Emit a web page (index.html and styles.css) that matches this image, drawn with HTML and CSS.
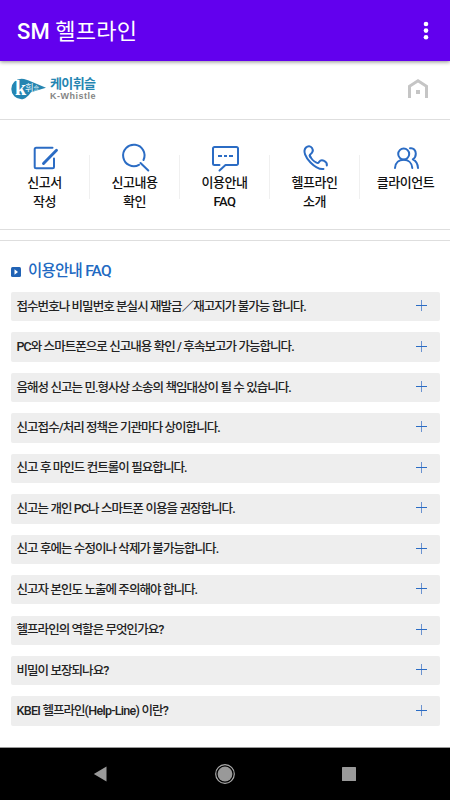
FILE: index.html
```html
<!DOCTYPE html>
<html lang="ko">
<head>
<meta charset="utf-8">
<meta name="viewport" content="width=device-width">
<title>SM 헬프라인</title>
<link rel="stylesheet" href="styles.css">
</head>
<body>
<header class="appbar">
  <h1>SM <span>헬프라인</span></h1>
  <svg class="more" width="6" height="20" viewBox="0 0 6 20" fill="#fff"><circle cx="3" cy="3" r="2.3"/><circle cx="3" cy="9.6" r="2.3"/><circle cx="3" cy="16.2" r="2.3"/></svg>
</header>
<div class="brand">
  <svg class="logo" width="36" height="22" viewBox="0 0 36 22">
    <path d="M10.5 .8C14 .8 17 2.2 20 3.6L35 9.8L20 14.2C17 18.5 14 21.2 10.5 21.2A10.2 10.2 0 0 1 10.5 .8Z" fill="#2585b1"/>
    <text class="logo-k" x="4" y="17.3">k</text>
    <text class="logo-ko" x="14" y="13">휘</text>
    <text class="logo-ko2" x="22.6" y="12">슬</text>
  </svg>
  <div class="names"><span class="ko">케이휘슬</span><span class="en">K-Whistle</span></div>
  <svg class="home" width="22" height="20" viewBox="0 0 22 20"><path d="M2.5 19V7.2L11 1.8L19.5 7.2V19" fill="none" stroke="#c5c5c5" stroke-width="3"/><rect x="9" y="11" width="4" height="4" fill="#c5c5c5"/></svg>
</div>
<nav class="menu">
  <a><svg width="30" height="30" viewBox="0 0 30 30"><path d="M22.500 4.700H6.200a1.500 1.500 0 0 0-1.500 1.500V23.700a1.500 1.500 0 0 0 1.500 1.500H22.500a1.500 1.500 0 0 0 1.500-1.500V15.500"/><path d="M13.500 20.500L26.500 7.200" stroke-width="2.900"/></svg><span>신고서<br>작성</span></a>
  <a><svg width="30" height="30" viewBox="0 0 30 30"><path d="M19 21.800A10.700 10.700 0 1 1 23.500 17M20.500 20L28.300 27.500"/></svg><span>신고내용<br>확인</span></a>
  <a><svg width="30" height="30" viewBox="0 0 30 30"><path d="M9.500 22H4.500a1.500 1.500 0 0 1-1.500-1.500V5.500a1.500 1.500 0 0 1 1.500-1.500H26.500a1.500 1.500 0 0 1 1.500 1.500V20.500a1.500 1.500 0 0 1-1.500 1.500H15.500L9.500 27.500"/><path class="dots" d="M8 13h4M14 13h3M19 13h4"/></svg><span>이용안내<br>FAQ</span></a>
  <a><svg width="30" height="30" viewBox="0 0 30 30"><path d="M10.500 14.200c-1-1-1-2 0-3C13.500 9 13.200 7 12 5 10.500 2.700 7.800 2.700 6 4.500 2.500 8 5.500 14.500 10.500 19.500 15 24 20 26.500 23.500 26"/><path d="M9.800 12.500C11 15.500 14 18.500 16.500 19.700c1.200.5 2 .2 2.600-.8 1.200-1.700 3.400-2 5.100-1 2 1.100 3 2.700 2.600 4.600"/></svg><span>헬프라인<br>소개</span></a>
  <a><svg width="30" height="30" viewBox="0 0 30 30"><circle cx="13.700" cy="11" r="5.500"/><path d="M5 25c.4-5.400 4.200-8.200 8.700-8.200s8.200 2.800 8.600 8.200M20 5.300c3.500-.8 5.800 2 5.800 5.500 0 2.600-1.200 4.500-3 5.500 3.200 1.500 5 4.700 5.200 8.700"/></svg><span>클라이언트</span></a>
</nav>
<main class="faq">
  <h2><svg width="10" height="10" viewBox="0 0 10 10"><rect width="10" height="10" rx="1.500" fill="#2163b5"/><path d="M3.500 2.300L7 5L3.500 7.700Z" fill="#fff"/></svg>이용안내 FAQ</h2>
  <ul>
    <li><span>접수번호나 비밀번호 분실시 재발금／재고지가 불가능 합니다.</span><i></i></li>
    <li><span>PC와 스마트폰으로 신고내용 확인 / 후속보고가 가능합니다.</span><i></i></li>
    <li><span>음해성 신고는 민.형사상 소송의 책임대상이 될 수 있습니다.</span><i></i></li>
    <li><span>신고접수/처리 정책은 기관마다 상이합니다.</span><i></i></li>
    <li><span>신고 후 마인드 컨트롤이 필요합니다.</span><i></i></li>
    <li><span>신고는 개인 PC나 스마트폰 이용을 권장합니다.</span><i></i></li>
    <li><span>신고 후에는 수정이나 삭제가 불가능합니다.</span><i></i></li>
    <li><span>신고자 본인도 노출에 주의해야 합니다.</span><i></i></li>
    <li><span>헬프라인의 역할은 무엇인가요?</span><i></i></li>
    <li><span>비밀이 보장되나요?</span><i></i></li>
    <li><span><b>KBEI</b> 헬프라인<b>(Help-Line)</b> 이란?</span><i></i></li>
  </ul>
</main>
<footer class="navbar">
  <svg width="14" height="16" viewBox="0 0 14 16"><path d="M.8 8L13.500 .5V15.500Z" fill="#999"/></svg>
  <svg width="20" height="20" viewBox="0 0 20 20"><circle cx="10" cy="10" r="9.300" fill="none" stroke="#aaa" stroke-width="1.200"/><circle cx="10" cy="10" r="7.400" fill="#999"/></svg>
  <svg width="14" height="14" viewBox="0 0 14 14"><rect width="14" height="14" rx=".5" fill="#999"/></svg>
</footer>
</body>
</html>
```
FILE: styles.css
```css
* { box-sizing: border-box; margin: 0; padding: 0; }
body {
  width: 450px;
  height: 800px;
  overflow: hidden;
  display: flex;
  flex-direction: column;
  background: #fff;
  color: #111;
  font-family: Roboto, "Noto Sans CJK KR", sans-serif;
}
.appbar {
  flex: none;
  height: 61px;
  padding: 1px 21px 0 17px;
  display: flex;
  align-items: center;
  justify-content: space-between;
  background: #6200ee;
  color: #fff;
  box-shadow: 0 1px 4px rgba(0, 0, 0, .45);
}
.appbar h1 { font-size: 22px; font-weight: 500; line-height: 30px; padding-top: 1px; letter-spacing: .1px; }
.appbar h1 span { font-weight: 400; letter-spacing: .2px; }
.brand {
  flex: none;
  height: 59px;
  padding: 0 21px 3px 11px;
  display: flex;
  align-items: center;
  border-bottom: 1px solid #dedede;
}
.logo-k { font: bold 20px "Liberation Serif", serif; fill: #fff; }
.logo-ko { font: 9.5px "Noto Sans CJK KR", sans-serif; fill: #e2f2f8; }
.logo-ko2 { font: 6px "Noto Sans CJK KR", sans-serif; fill: #d8ecf4; }
.names { display: flex; flex-direction: column; margin: 1px 0 0 3px; }
.names .ko { font-size: 13px; line-height: 15px; font-weight: 700; color: #2585b1; letter-spacing: -.6px; }
.names .en { font: 700 9px/11px "Liberation Sans", sans-serif; color: #858585; letter-spacing: .5px; }
.home { margin-left: auto; }
.menu {
  flex: none;
  height: 110px;
  padding-top: 23px;
  display: grid;
  grid-template-columns: repeat(5, 1fr);
  border-bottom: 1px solid #dedede;
}
.menu a {
  display: flex;
  flex-direction: column;
  align-items: center;
  position: relative;
  font-size: 13px;
  font-weight: 500;
  line-height: 19px;
  letter-spacing: -.5px;
  text-align: center;
  color: #111;
}
.menu a span { margin-right: 1px; }
.menu a:last-child span { margin-right: -1px; }
.menu a + a::before {
  content: "";
  position: absolute;
  left: -1px;
  top: 12px;
  width: 1px;
  height: 44px;
  background: #f0f0f0;
}
.menu svg { fill: none; stroke: #2b6cc4; stroke-width: 2; stroke-linecap: round; stroke-linejoin: round; }
.menu .dots { stroke-linecap: butt; }
.faq { flex: 1; margin-top: 10px; border-top: 1px solid #dedede; padding: 16px 10px 0 11px; }
.faq h2 {
  display: flex;
  align-items: center;
  gap: 7px;
  height: 24px;
  font-size: 15.5px;
  font-weight: 500;
  letter-spacing: -.75px;
  color: #2169c2;
}
.faq h2 svg { margin-top: 6px; }
.faq ul { list-style: none; margin-top: 11px; display: grid; gap: 11.1px; }
.faq li {
  height: 29.35px;
  padding: 0 13px 0 6px;
  display: flex;
  align-items: center;
  justify-content: space-between;
  border-radius: 2px;
  background: #eee;
  font-size: 12.5px;
  font-weight: 500;
  color: #222;
  line-height: 20px;
  letter-spacing: -.95px;
}
.faq li span { margin-left: -.5px; word-spacing: .15px; }
.faq b { font-weight: 500; letter-spacing: -.7px; }
.faq i {
  width: 11px;
  height: 11px;
  margin-bottom: 2px;
  background: linear-gradient(#2b6cc4, #2b6cc4) center / 11px 1px no-repeat, linear-gradient(#6a92d0, #6a92d0) center / 1px 11px no-repeat;
}
.navbar {
  flex: none;
  height: 53px;
  padding: 0 94px 0 93px;
  display: flex;
  align-items: center;
  justify-content: space-between;
  background: #000;
  border-top: 1px solid #999;
}
```
